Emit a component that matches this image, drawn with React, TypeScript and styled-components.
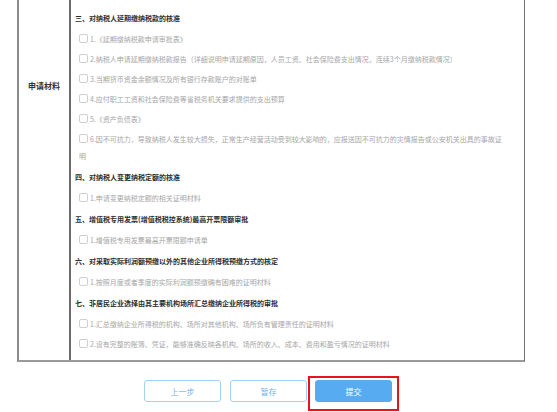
import React from 'react';
import styled, { createGlobalStyle } from 'styled-components';

const GlobalStyle = createGlobalStyle`
  html, body {
    margin: 0;
    padding: 0;
    background: #ffffff;
  }
  body {
    font-family: "Noto Sans CJK SC", "Liberation Sans", sans-serif;
  }
`;

const Page = styled.div`
  width: 557px;
  height: 412px;
  overflow: hidden;
  padding-left: 17px;
  box-sizing: border-box;
`;

const Table = styled.div`
  width: 508px;
  display: grid;
  grid-template-columns: 52px 1fr;
  border-left: 2px solid #8a8a8a;
  border-right: 1px solid #6f6f6f;
  border-bottom: 2px solid #9a9a9a;
  box-sizing: border-box;
`;

const LabelCell = styled.div`
  border-right: 2px solid #6a6a6a;
  display: flex;
  justify-content: center;
  align-items: flex-start;
  padding-top: 80px;
  font-size: 8px;
  line-height: 12px;
  font-weight: 700;
  color: #333;
`;

const ContentCell = styled.div`
  padding: 7px 21px 6px 4px;
`;

const SectionTitle = styled.div`
  height: 22px;
  line-height: 22px;
  font-size: 7px;
  font-weight: 700;
  color: #2e2e2e;
  white-space: nowrap;
`;

const Item = styled.div`
  padding: 1.5px 0 1.5px 4px;
  min-height: 17px;
  line-height: 17px;
  font-size: 7px;
  color: #a6a6a6;
`;

const Check = styled.span`
  display: inline-block;
  width: 7px;
  height: 7px;
  border: 1px solid #cfcfcf;
  border-radius: 2px;
  vertical-align: -1.5px;
  margin-right: 2px;
  background: #fff;
`;

const ButtonRow = styled.div`
  width: 508px;
  display: flex;
  justify-content: center;
  gap: 9px;
  margin-top: 18px;
  padding-right: 6px;
  box-sizing: border-box;
`;

const Button = styled.button<{ $primary?: boolean }>`
  width: 77px;
  height: 22px;
  padding: 0;
  border-radius: 3px;
  font-family: "Noto Sans CJK SC", "Liberation Sans", sans-serif;
  font-size: 8px;
  cursor: pointer;
  border: 1px solid ${(p) => (p.$primary ? '#57abf1' : '#a3d0f7')};
  background: ${(p) => (p.$primary ? '#57abf1' : '#ffffff')};
  color: ${(p) => (p.$primary ? '#ffffff' : '#6fb3ee')};
`;

const Highlight = styled.span`
  position: relative;
  display: inline-flex;
  margin-left: -1px;

  &::after {
    content: '';
    position: absolute;
    top: -4px;
    left: -7px;
    right: -7px;
    bottom: -9px;
    border: 2px solid #e8141a;
    pointer-events: none;
  }
`;

type Section = { title: string; items: string[] };

const sections: Section[] = [
  {
    title: '三、对纳税人延期缴纳税款的核准',
    items: [
      '1.《延期缴纳税款申请审批表》',
      '2.纳税人申请延期缴纳税款报告（详细说明申请延期原因，人员工资、社会保险费支出情况，连续3个月缴纳税款情况）',
      '3.当期货币资金余额情况及所有银行存款账户的对账单',
      '4.应付职工工资和社会保险费等省税务机关要求提供的支出预算',
      '5.《资产负债表》',
      '6.因不可抗力，导致纳税人发生较大损失，正常生产经营活动受到较大影响的，应报送因不可抗力的灾情报告或公安机关出具的事故证明',
    ],
  },
  {
    title: '四、对纳税人变更纳税定额的核准',
    items: ['1.申请变更纳税定额的相关证明材料'],
  },
  {
    title: '五、增值税专用发票(增值税税控系统)最高开票限额审批',
    items: ['1.增值税专用发票最高开票限额申请单'],
  },
  {
    title: '六、对采取实际利润额预缴以外的其他企业所得税预缴方式的核定',
    items: ['1.按照月度或者季度的实际利润额预缴确有困难的证明材料'],
  },
  {
    title: '七、非居民企业选择由其主要机构场所汇总缴纳企业所得税的审批',
    items: [
      '1.汇总缴纳企业所得税的机构、场所对其他机构、场所负有管理责任的证明材料',
      '2.设有完整的账簿、凭证，能够准确反映各机构、场所的收入、成本、费用和盈亏情况的证明材料',
    ],
  },
];

const App = () => {
  return (
    <Page>
      <GlobalStyle />
      <Table>
        <LabelCell>申请材料</LabelCell>
        <ContentCell>
          {sections.map((s) => (
            <React.Fragment key={s.title}>
              <SectionTitle>{s.title}</SectionTitle>
              {s.items.map((it) => (
                <Item key={it}>
                  <Check />
                  {it}
                </Item>
              ))}
            </React.Fragment>
          ))}
        </ContentCell>
      </Table>
      <ButtonRow>
        <Button type="button">上一步</Button>
        <Button type="button">暂存</Button>
        <Highlight>
          <Button type="button" $primary>
            提交
          </Button>
        </Highlight>
      </ButtonRow>
    </Page>
  );
};

export default App;
